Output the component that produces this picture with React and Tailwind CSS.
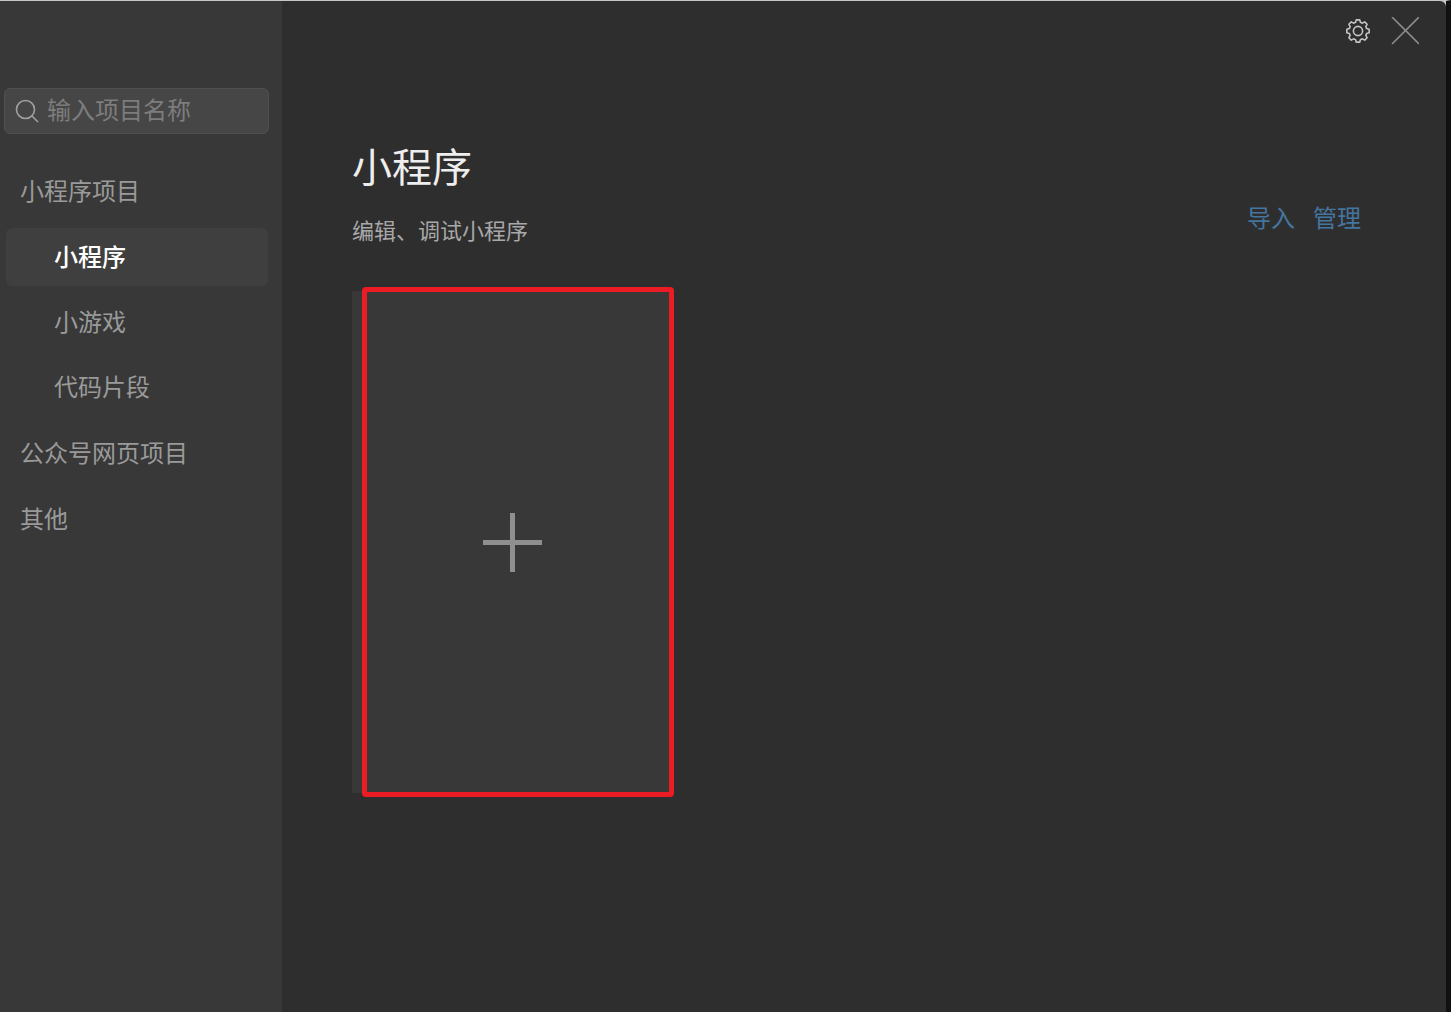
import React from "react";

const FONT =
  "font-['Noto_Sans_CJK_SC','Noto_Sans',sans-serif]";

function gearPath() {
  const points = [];
  for (let i = 0; i < 8; i++) {
    const mid = (i * 45 - 90) * (Math.PI / 180);
    const corners = [
      [-0.27, 9],
      [-0.15, 11.3],
      [0.15, 11.3],
      [0.27, 9],
    ];
    corners.forEach(([offset, radius]) => {
      const x = 13 + radius * Math.cos(mid + offset);
      const y = 13 + radius * Math.sin(mid + offset);
      points.push(x.toFixed(2) + " " + y.toFixed(2));
    });
  }
  return "M" + points.join("L") + "Z";
}

function GearIcon() {
  return (
    <svg viewBox="0 0 26 26" className="size-[26px]" fill="none" stroke="currentColor" strokeWidth="1.6" strokeLinejoin="round" aria-hidden="true">
      <path d={gearPath()} />
      <circle cx="13" cy="13" r="4.6" />
    </svg>
  );
}

function CloseIcon() {
  return (
    <svg viewBox="0 0 28 28" className="size-7" fill="none" stroke="currentColor" strokeWidth="1.6" aria-hidden="true">
      <path d="M1 0L28 27M28 0L1 27" />
    </svg>
  );
}

function SearchIcon() {
  return (
    <svg viewBox="0 0 24 24" className="size-6 shrink-0 text-[#a0a0a0]" fill="none" stroke="currentColor" strokeWidth="1.6" aria-hidden="true">
      <circle cx="10.5" cy="10.5" r="9" />
      <path d="M17 17L23 23" />
    </svg>
  );
}

function NavItem({ label, nested, active }) {
  return (
    <button
      type="button"
      aria-current={active ? "page" : undefined}
      className={
        "flex h-[58px] w-full items-center rounded-md pb-0.5 text-left text-2xl " +
        (nested ? "pl-12 " : "pl-3.5 ") +
        (active ? "bg-[#3f3f3f] font-medium text-white" : "text-[#9a9a9a]")
      }
    >
      {label}
    </button>
  );
}

function Sidebar() {
  return (
    <aside className="w-[282px] shrink-0 bg-[#383838] pt-[87px]">
      <label className="mr-[13px] ml-1 flex h-[46px] items-center gap-2 rounded-md border border-[#505050] bg-[#464646] pl-2.5">
        <SearchIcon />
        <input
          type="text"
          aria-label="输入项目名称"
          placeholder="输入项目名称"
          className="w-full min-w-0 bg-transparent pb-1 text-2xl text-[#dddddd] outline-none placeholder:text-[#7d7d7d]"
        />
      </label>
      <nav className="mt-7 mr-3.5 ml-1.5 flex flex-col gap-2">
        <NavItem label="小程序项目" />
        <div className="flex flex-col gap-[7px]">
          <NavItem label="小程序" nested active />
          <NavItem label="小游戏" nested />
          <NavItem label="代码片段" nested />
        </div>
        <NavItem label="公众号网页项目" />
        <NavItem label="其他" />
      </nav>
    </aside>
  );
}

function AddCard() {
  return (
    <button type="button" aria-label="新建小程序" className="relative flex h-[502px] w-[321px] items-center justify-center bg-[#383838]">
      <svg viewBox="0 0 60 60" className="size-[60px]" stroke="#8f8f8f" strokeWidth="5" aria-hidden="true">
        <path d="M29.5 1V60M0 30.5H59" />
      </svg>
      <span className="absolute -top-1 -right-px -bottom-1 left-2.5 rounded-sm border-5 border-[#ec1c24]" />
    </button>
  );
}

export default function App() {
  return (
    <div className={"min-h-screen bg-[linear-gradient(#c4c8c5_8px,#111111_8px)] bg-[length:calc(100%-5px)_100%] bg-no-repeat " + FONT}>
      <div className="min-h-screen border-t border-r-5 border-t-[#c4c8c5] border-r-[#111111]">
        <div className="flex min-h-[calc(100vh-1px)] overflow-hidden rounded-tr-md bg-[#2e2e2e]">
          <Sidebar />
          <main className="flex-1">
            <header className="flex h-[60px] items-center justify-end gap-5 pr-[27px]">
              <button type="button" aria-label="设置" className="text-[#c4c4c4]">
                <GearIcon />
              </button>
              <button type="button" aria-label="关闭" className="text-[#8c8c8c]">
                <CloseIcon />
              </button>
            </header>
            <div className="flex items-end justify-between pt-[74px] pr-[85px] pl-[70px]">
              <div>
                <h1 className="text-[40px] leading-[60px] text-[#eeeeee]">小程序</h1>
                <p className="mt-[18px] text-[22px] leading-8 text-[#a8a8a8]">编辑、调试小程序</p>
              </div>
              <div className="mb-3 flex gap-[18px] text-2xl text-[#44759f]">
                <a href="#import">导入</a>
                <a href="#manage">管理</a>
              </div>
            </div>
            <div className="pt-[46px] pl-[70px]">
              <AddCard />
            </div>
          </main>
        </div>
      </div>
    </div>
  );
}
